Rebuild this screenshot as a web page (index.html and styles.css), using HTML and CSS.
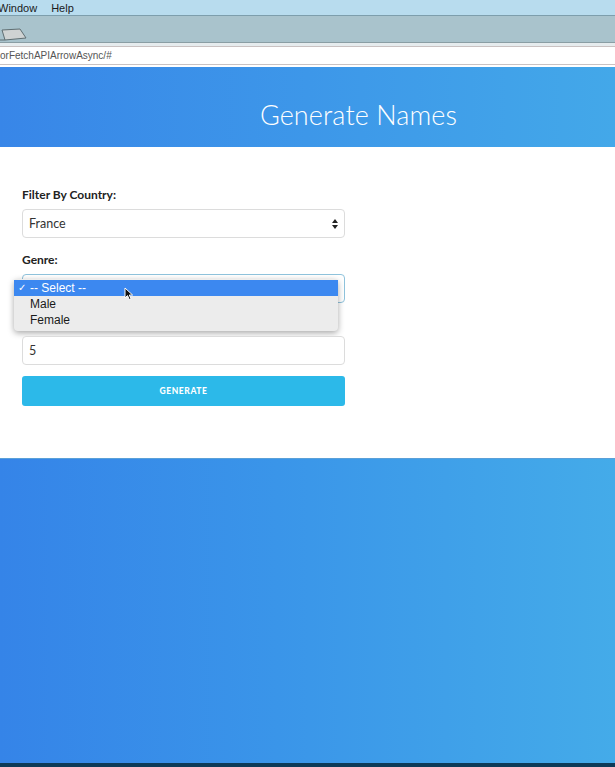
FILE: index.html
```html
<!DOCTYPE html>
<html>
<head>
<meta charset="utf-8">
<link rel="stylesheet" href="styles.css">
</head>
<body>
<div class="screen">
  <div class="menubar"><span class="menu-item first">Window</span><span class="menu-item">Help</span></div>
  <div class="toolbar">
    <svg class="tab-icon" width="30" height="14" viewBox="0 0 30 14"><path d="M-2 13 L5 13 L2 3 L20 2 L26 11 L5 13" fill="#cfd3d3" stroke="#5f6e72" stroke-width="1"/></svg>
  </div>
  <div class="strip"></div>
  <div class="urlbar">orFetchAPIArrowAsync/#</div>
  <div class="page">
    <header class="hero"><h1 class="title">Generate Names</h1></header>
    <main class="main">
      <form class="form">
        <div class="group">
          <label class="label">Filter By Country:</label>
          <div class="select"><span>France</span><span class="arrows"><svg width="6" height="10" viewBox="0 0 6 10"><path d="M0 4 L3 0 L6 4 Z M0 6 L3 10 L6 6 Z" fill="#222"/></svg></span></div>
        </div>
        <div class="group">
          <label class="label">Genre:</label>
          <div class="select focused"><span></span><span class="arrows"><svg width="6" height="10" viewBox="0 0 6 10"><path d="M0 4 L3 0 L6 4 Z M0 6 L3 10 L6 6 Z" fill="#222"/></svg></span></div>
          <ul class="popup">
            <li class="opt active"><span class="check">✓</span>-- Select --</li>
            <li class="opt">Male</li>
            <li class="opt">Female</li>
          </ul>
          <svg class="cursor" width="10" height="14" viewBox="0 0 10 14"><path d="M1 1 L1 11 L3.5 8.6 L5.3 12.6 L7 11.8 L5.3 8 L8.6 8 Z" fill="#111" stroke="#fff" stroke-width="1"/></svg>
        </div>
        <div class="group">
          <div class="label-space"></div>
          <div class="input">5</div>
        </div>
        <button type="button" class="btn">GENERATE</button>
      </form>
    </main>
    <footer class="footer"></footer>
    <div class="bottom"></div>
  </div>
</div>
</body>
</html>
```
FILE: styles.css
```css
html, body { margin: 0; padding: 0; }
body { width: 615px; height: 767px; overflow: hidden; font-family: Lato, "Liberation Sans", sans-serif; background: #fff; }
.screen { display: flex; flex-direction: column; height: 767px; }
.menubar { height: 15px; background: #b8dcee; border-bottom: 1px solid #7d9eac; display: flex; align-items: center; font-family: "Liberation Sans", sans-serif; font-size: 11px; color: #1a1a1a; }
.menu-item { margin-left: 14px; }
.menu-item.first { margin-left: -2px; }
.toolbar { height: 26px; background: #a9c3cc; border-bottom: 1px solid #8a9ea4; position: relative; }
.tab-icon { position: absolute; left: 0; top: 11px; }
.strip { height: 3px; background: #e6ecee; border-bottom: 1px solid #c9c2c2; }
.urlbar { height: 17px; background: #fff; border-bottom: 1px solid #c9c2c2; font-family: "Liberation Sans", sans-serif; font-size: 10px; color: #555; line-height: 17px; }
.page { flex: 1; display: flex; flex-direction: column; margin-top: 2px; }
.hero { height: 80px; box-sizing: border-box; padding-top: 14px; background: linear-gradient(90deg, #3886e8 0%, #3d97e9 50%, #43a8e9 100%); display: flex; align-items: center; justify-content: center; }
.title { margin: 0 0 0 102px; font-family: Lato, sans-serif; font-weight: 300; font-size: 27px; color: #fff; letter-spacing: 0.1px; }
.main { height: 311px; background: #fff; padding: 40px 0 0 22px; box-sizing: border-box; }
.form { width: 323px; display: flex; flex-direction: column; }
.group { display: flex; flex-direction: column; margin-bottom: 14px; position: relative; }
.label { font-size: 12px; font-weight: 700; color: #222; line-height: 16px; margin-bottom: 6px; }
.label-space { height: 16px; margin-bottom: 3px; }
.select, .input { height: 27px; border: 1px solid #dcdcdc; border-radius: 4px; display: flex; align-items: center; justify-content: space-between; padding: 0 6px; font-size: 12.5px; color: #333; background: #fff; }
.select.focused { border-color: #8fc3dc; }
.arrows { display: flex; align-items: center; }
.input { margin-bottom: -3px; }
.popup { position: absolute; left: -8px; top: 27px; width: 324px; margin: 0; padding: 1px 0 3px; list-style: none; background: #ececec; border-radius: 4px; box-shadow: 0 2px 6px rgba(0,0,0,0.35); font-family: "Liberation Sans", sans-serif; font-size: 12px; color: #1a1a1a; }
.opt { height: 16px; line-height: 16px; padding-left: 16px; position: relative; }
.opt.active { background: #3c88f0; color: #fff; }
.check { position: absolute; left: 4px; font-size: 10px; }
.cursor { position: absolute; left: 102px; top: 35px; }
.btn { height: 30px; border: none; border-radius: 3px; background: #2cb9e9; color: #fff; font-family: Lato, sans-serif; font-weight: 900; font-size: 8.5px; letter-spacing: 0.6px; padding: 0; cursor: pointer; }
.footer { flex: 1; background: linear-gradient(90deg, #3584e8 0%, #3a95e9 45%, #44abe9 100%); border-top: 1px solid #5aa0d8; }
.bottom { height: 4px; background: #0d3a57; }
```
